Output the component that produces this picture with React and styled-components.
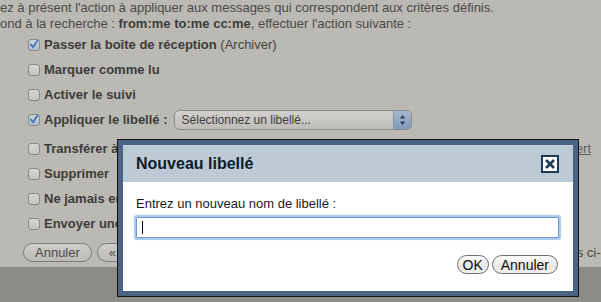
import React from 'react';
import styled, { createGlobalStyle } from 'styled-components';

const GlobalStyle = createGlobalStyle`
  html, body {
    margin: 0;
    padding: 0;
    width: 601px;
    height: 302px;
    overflow: hidden;
    background: #bbb9b4;
    font-family: "Liberation Sans", Arial, sans-serif;
  }
`;

const Page = styled.div`
  position: relative;
  width: 601px;
  height: 302px;
  overflow: hidden;
  display: flex;
  flex-direction: column;
  color: #444340;
  font-size: 13px;
`;

const Intro = styled.div`
  line-height: 16px;
  white-space: nowrap;
  color: #4a4946;
`;

const List = styled.div`
  display: flex;
  flex-direction: column;
  padding-left: 28px;
`;

const Row = styled.div`
  height: 25px;
  display: flex;
  align-items: center;
  gap: 4px;
  white-space: nowrap;
  margin-bottom: ${p => (p.$extra ? '4px' : '0')};
  padding-right: ${p => (p.$spread ? '10px' : '0')};
  justify-content: ${p => (p.$spread ? 'space-between' : 'flex-start')};
`;

const RowLabel = styled.span`
  display: flex;
  align-items: center;
  gap: 4px;
`;

const Strong = styled.b`
  font-weight: bold;
  color: #3d3c3a;
`;

const Box = styled.span`
  width: 12px;
  height: 12px;
  box-sizing: border-box;
  border: 1px solid #8c8a86;
  border-radius: 3px;
  background: ${p => (p.$on ? 'linear-gradient(#c9d2dc, #aebdcc)' : 'linear-gradient(#d6d4d0, #c6c4c0)')};
  display: inline-flex;
  align-items: center;
  justify-content: center;
  flex-shrink: 0;
`;

const SelectBox = styled.div`
  margin-left: 2px;
  width: 238px;
  height: 20px;
  box-sizing: border-box;
  border: 1px solid #8d8b87;
  border-radius: 5px;
  background: linear-gradient(#d2d0cc, #bfbdb9);
  display: flex;
  align-items: stretch;
  overflow: hidden;
  font-size: 12px;
  color: #3e3d3b;
`;

const SelectText = styled.span`
  flex: 1;
  padding-left: 7px;
  display: flex;
  align-items: center;
`;

const Stepper = styled.span`
  width: 17px;
  border-left: 1px solid #8a96a6;
  background: linear-gradient(#a8b8cc, #7f99b8);
  display: flex;
  align-items: center;
  justify-content: center;
`;

const Link = styled.span`
  color: #5d5c59;
  text-decoration: underline;
`;

const BottomRow = styled.div`
  display: grid;
  grid-template-columns: 480px auto;
  align-items: center;
  padding-left: 23px;
  margin-top: 7px;
  white-space: nowrap;
`;

const Buttons = styled.div`
  display: flex;
  gap: 5px;
`;

const PageButton = styled.span`
  height: 19px;
  box-sizing: border-box;
  padding: 0 11px;
  border: 1px solid #7f7d79;
  border-radius: 10px;
  background: linear-gradient(#cfcdc9, #bdbbb7);
  display: flex;
  align-items: center;
  color: #4a4946;
`;

const Note = styled.span`
  color: #4a4946;
`;

const Footer = styled.div`
  flex: 1;
  margin-top: 5px;
  background: #8e8c86;
`;

const Modal = styled.div`
  position: absolute;
  left: 117px;
  top: 139px;
  width: 462px;
  box-sizing: border-box;
  border: 1px solid #111;
  background: #4b6384;
  padding: 5px;
  display: flex;
  flex-direction: column;
`;

const Header = styled.div`
  height: 37px;
  background: #bccad6;
  display: flex;
  align-items: center;
  justify-content: space-between;
  padding: 0 14px 0 13px;
`;

const Title = styled.h2`
  margin: 0;
  font-size: 16px;
  font-weight: bold;
  color: #0d1b2c;
`;

const Close = styled.span`
  width: 18px;
  height: 18px;
  box-sizing: border-box;
  border: 2px solid #1e3956;
  background: #fff;
  display: flex;
  align-items: center;
  justify-content: center;
`;

const Body = styled.div`
  background: #fff;
  padding: 14px 14px 17px 13px;
  display: flex;
  flex-direction: column;
`;

const Label = styled.div`
  line-height: 16px;
  color: #1a1a1a;
  font-size: 13px;
`;

const Field = styled.div`
  margin-top: 5px;
  height: 21px;
  box-sizing: border-box;
  border: 1px solid #6f9bd0;
  box-shadow: 0 0 1px 2px #a9c8ee;
  border-radius: 1px;
  display: flex;
  align-items: center;
  padding-left: 5px;
`;

const Caret = styled.span`
  width: 1px;
  height: 13px;
  background: #000;
`;

const Input = styled.input`
  flex: 1;
  border: none;
  outline: none;
  background: transparent;
  font: 13px "Liberation Sans", Arial, sans-serif;
  caret-color: transparent;
`;

const Actions = styled.div`
  margin-top: 17px;
  display: flex;
  justify-content: flex-end;
  gap: 3px;
  padding-right: 1px;
`;

const DialogButton = styled.button`
  height: 19px;
  padding: 0 ${p => (p.$wide ? '8px' : '5px')};
  border: 1px solid #6e6e6e;
  border-radius: 10px;
  background: linear-gradient(#ffffff, #e6e6e6 60%, #f2f2f2);
  font: 14px "Liberation Sans", Arial, sans-serif;
  color: #111;
  display: flex;
  align-items: center;
`;

const Check = () => (
  <svg width="11" height="11" viewBox="0 0 11 11">
    <path d="M2 5.5 L4.5 8.5 L9.5 1" fill="none" stroke="#3d6ea8" strokeWidth="1.8" strokeLinecap="round" />
  </svg>
);

const CheckRow = ({ on, children, ...rest }) => (
  <Row {...rest}>
    <RowLabel>
      <Box $on={on}>{on && <Check />}</Box>
      {children}
    </RowLabel>
  </Row>
);

const App = () => (
  <>
    <GlobalStyle />
    <Page>
      <Intro>
        ez à présent l'action à appliquer aux messages qui correspondent aux critères définis.
        <br />
        ond à la recherche : <Strong>from:me to:me cc:me</Strong>, effectuer l'action suivante :
      </Intro>
      <List>
        <CheckRow on>
          <span><Strong>Passer la boîte de réception</Strong> (Archiver)</span>
        </CheckRow>
        <CheckRow><Strong>Marquer comme lu</Strong></CheckRow>
        <CheckRow><Strong>Activer le suivi</Strong></CheckRow>
        <Row $extra>
          <RowLabel>
            <Box $on><Check /></Box>
            <Strong>Appliquer le libellé :</Strong>
          </RowLabel>
          <SelectBox>
            <SelectText>Sélectionnez un libellé...</SelectText>
            <Stepper>
              <svg width="7" height="12" viewBox="0 0 7 12">
                <path d="M3.5 1 L6 4.5 L1 4.5 Z M3.5 11 L6 7.5 L1 7.5 Z" fill="#2a3b52" />
              </svg>
            </Stepper>
          </SelectBox>
        </Row>
        <Row $spread>
          <RowLabel>
            <Box />
            <Strong>Transférer à</Strong>
          </RowLabel>
          <Link>transfert</Link>
        </Row>
        <CheckRow><Strong>Supprimer</Strong></CheckRow>
        <CheckRow><Strong>Ne jamais envoyer dans le spam</Strong></CheckRow>
        <CheckRow><Strong>Envoyer une réponse standard</Strong></CheckRow>
      </List>
      <BottomRow>
        <Buttons>
          <PageButton>Annuler</PageButton>
          <PageButton>« Précédent</PageButton>
        </Buttons>
        <Note>conversations ci-dessous</Note>
      </BottomRow>
      <Footer />

      <Modal>
        <Header>
          <Title>Nouveau libellé</Title>
          <Close>
            <svg width="12" height="12" viewBox="0 0 12 12">
              <path d="M2 2 L10 10 M10 2 L2 10" stroke="#1e3956" strokeWidth="2.6" />
            </svg>
          </Close>
        </Header>
        <Body>
          <Label>Entrez un nouveau nom de libellé :</Label>
          <Field>
            <Caret />
            <Input type="text" />
          </Field>
          <Actions>
            <DialogButton>OK</DialogButton>
            <DialogButton $wide>Annuler</DialogButton>
          </Actions>
        </Body>
      </Modal>
    </Page>
  </>
);

export default App;
